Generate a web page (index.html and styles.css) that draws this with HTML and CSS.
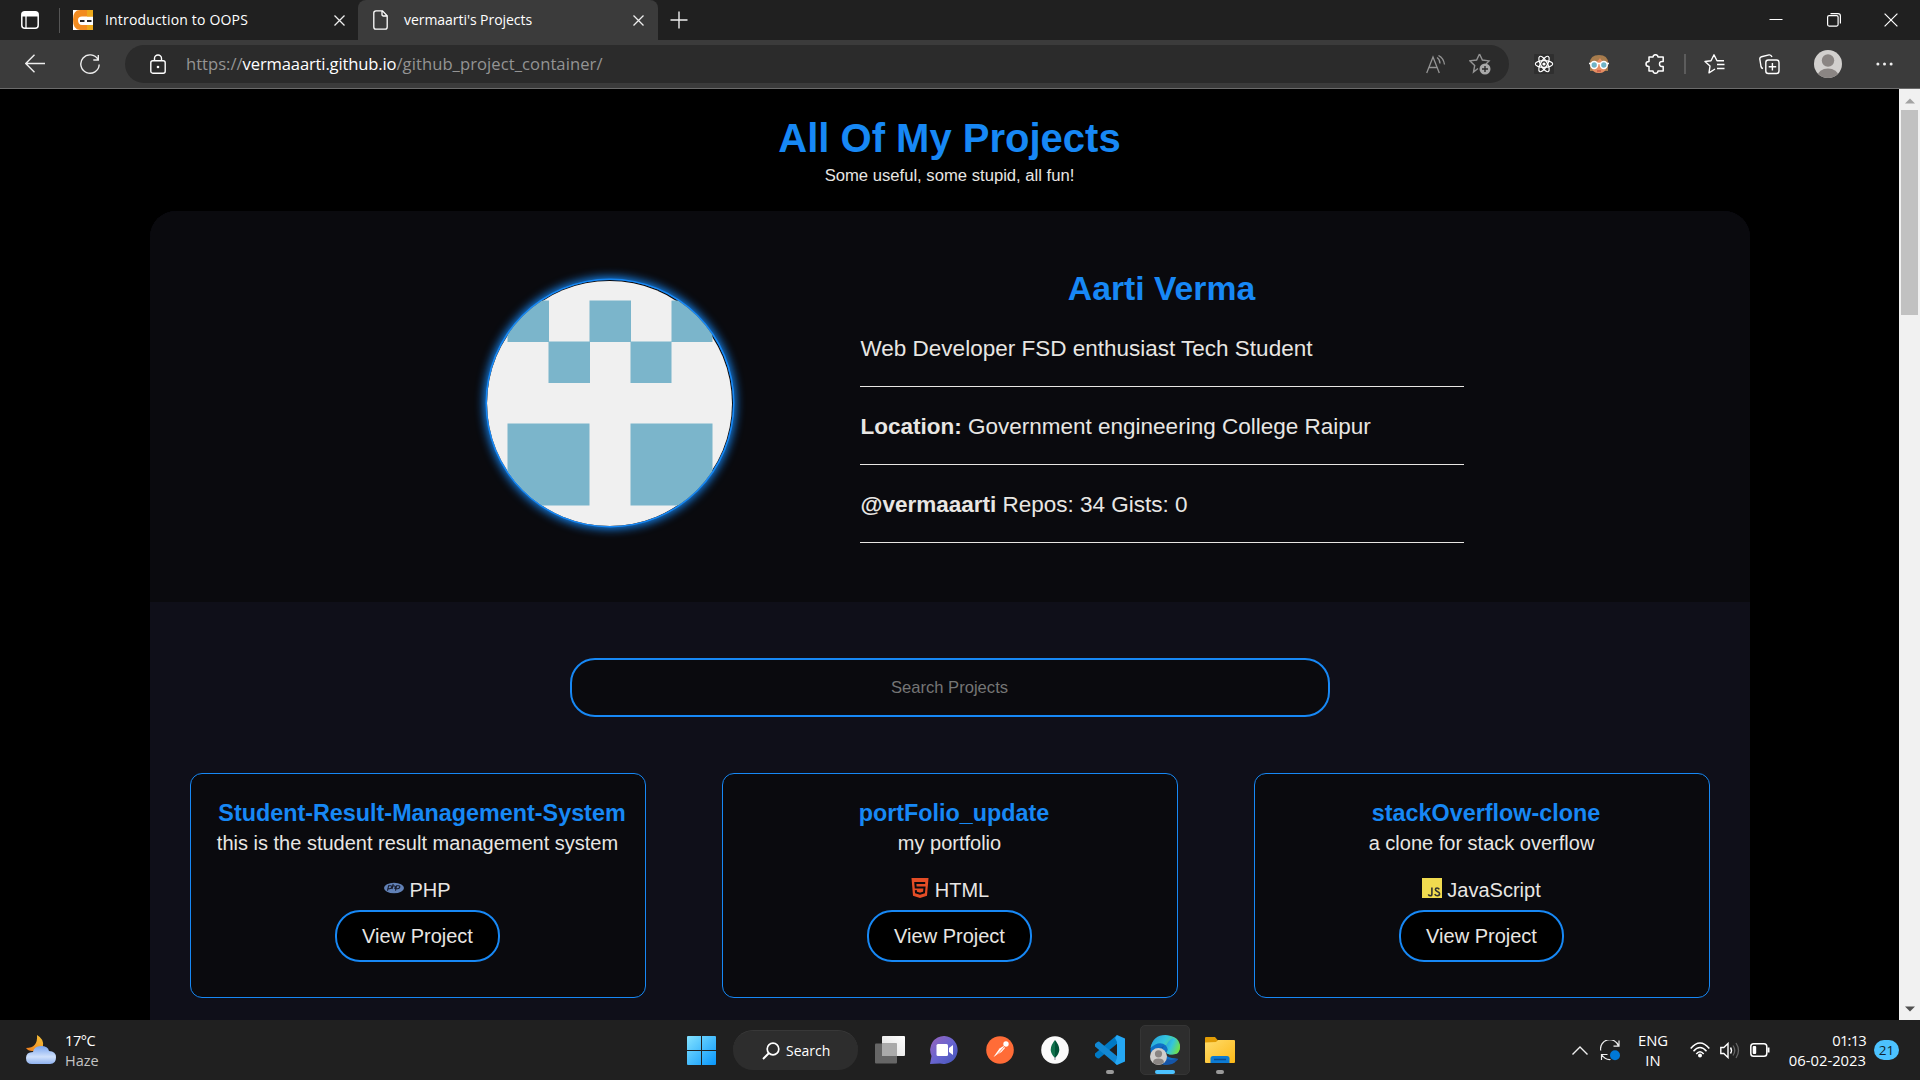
FILE: index.html
```html
<!DOCTYPE html>
<html lang="en">
<head>
<meta charset="utf-8">
<title>vermaarti's Projects</title>
<link rel="stylesheet" href="styles.css">
</head>
<body>
<div class="screen">
  <header class="tabbar">
    <svg class="i-tabs" width="18" height="18" viewBox="0 0 18 18"><rect x=".8" y=".8" width="16.4" height="16.4" rx="3" fill="none" stroke="#fff" stroke-width="1.5"/><path d="M1 3a2 2 0 0 1 2-2h12a2 2 0 0 1 2 2v2.500H1z" fill="#fff"/><path d="M5 5v12" stroke="#fff" stroke-width="1.300"/></svg>
    <span class="tab-sep"></span>
    <div class="tab">
      <svg width="20" height="20" viewBox="0 0 20 20"><rect width="20" height="20" fill="#fff"/><path d="M20 0H7Q0 0 0 9.500Q0 20 7 20H20V15H9Q5 15 5 10Q5 6.500 9 6.500H20z" fill="#f28b20"/><path d="M14 0h6v6.500h-6zM14 15h6v5h-6z" fill="#eda91b"/><path d="M7 11h4.500M14 11h4.500" stroke="#222" stroke-width="1.800"/></svg>
      <span class="tab-title intro">Introduction to OOPS</span>
      <svg class="x" width="11" height="11" viewBox="0 0 11 11"><path d="M.5.5l10 10M10.500.5l-10 10" stroke="#eee" stroke-width="1.300"/></svg>
    </div>
    <div class="tab active">
      <svg width="15" height="20" viewBox="0 0 15 20"><path d="M3 .8h6.500l4.700 4.900V17q0 2.200-2.200 2.200H3Q.8 19.200.8 17V3Q.8.8 3 .8zM9 1v3.500q0 1.500 1.500 1.500h3.500" fill="none" stroke="#fff" stroke-width="1.300"/></svg>
      <span class="tab-title">vermaarti's Projects</span>
      <svg class="x" width="11" height="11" viewBox="0 0 11 11"><path d="M.5.5l10 10M10.500.5l-10 10" stroke="#eee" stroke-width="1.300"/></svg>
    </div>
    <svg class="plus" width="18" height="18" viewBox="0 0 18 18"><path d="M9 .5v17M.5 9h17" stroke="#eee" stroke-width="1.400"/></svg>
    <div class="window-buttons">
      <svg width="14" height="14" viewBox="0 0 14 14"><path d="M.5 6.500h13" stroke="#fff"/></svg>
      <svg width="14" height="14" viewBox="0 0 14 14"><rect x=".6" y="2.600" width="10.500" height="10.500" rx="1.500" fill="none" stroke="#fff" stroke-width="1.200"/><path d="M3.500.6h7.500q2.400 0 2.400 2.400v7.500" fill="none" stroke="#fff" stroke-width="1.200"/></svg>
      <svg width="14" height="14" viewBox="0 0 14 14"><path d="M.6.6l12.800 12.800M13.400.6L.6 13.400" stroke="#fff" stroke-width="1.200"/></svg>
    </div>
  </header>

  <nav class="toolbar">
    <svg width="21" height="20" viewBox="0 0 21 20"><path d="M20 9.500H1M9.500.8L.8 9.500l8.700 8.700" fill="none" stroke="#eee" stroke-width="1.400"/></svg>
    <svg class="reload" width="21" height="21" viewBox="0 0 21 21"><path d="M18 5.500A9.200 9.200 0 1 0 19.200 10.500M18.300 1v5h-5" fill="none" stroke="#eee" stroke-width="1.400"/></svg>
    <div class="omnibox">
      <svg width="16" height="21" viewBox="0 0 16 21"><rect x=".8" y="6.800" width="14.400" height="12.400" rx="2" fill="none" stroke="#fff" stroke-width="1.400"/><path d="M4.500 7V4.500a3.500 3.500 0 0 1 7 0V7" fill="none" stroke="#fff" stroke-width="1.400"/><circle cx="8" cy="13" r="1.300" fill="#fff"/></svg>
      <span class="url"><span>https://</span><span class="domain">vermaaarti.github.io</span><span class="path">/github_project_container/</span></span>
      <svg class="aloud" width="20" height="19" viewBox="0 0 20 19"><path d="M.7 18L7 2l6.300 16M3 12.500h8M11 2.500q3 2 3 6M12.500.500q5 2.500 6 9" fill="none" stroke="#949494" stroke-width="1.300"/></svg>
      <svg class="staradd" width="23" height="22" viewBox="0 0 23 22"><path d="M10.500 1l2.900 6 6.600.9-3 3M9 15.500l-4.500 3.500 1.200-6.500L1 7.900 7.600 7l2.900-6" fill="none" stroke="#949494" stroke-width="1.400"/><circle cx="16" cy="16" r="5.500" fill="#a8a8a8"/><path d="M16 13v6M13 16h6" stroke="#2b2b2b" stroke-width="1.400"/></svg>
    </div>
    <svg class="react" width="20" height="20" viewBox="0 0 20 20"><rect width="20" height="20" rx="1" fill="#2f2f2f"/><g fill="none" stroke="#fff" stroke-width="1.200"><ellipse cx="10" cy="10" rx="8.700" ry="3.300"/><ellipse cx="10" cy="10" rx="8.700" ry="3.300" transform="rotate(60 10 10)"/><ellipse cx="10" cy="10" rx="8.700" ry="3.300" transform="rotate(120 10 10)"/></g><circle cx="10" cy="10" r="1.600" fill="#fff"/></svg>
    <svg class="face" width="20" height="20" viewBox="0 0 20 20"><path d="M1 17V9Q1 1 10 1t9 8v8z" fill="#a77c4d"/><path d="M3 9q5 0 8-5 2 4 6 5v4q0 6-7 6t-7-6z" fill="#e58d62"/><path d="M0 9.500h20" stroke="#fff" stroke-width="1.600"/><circle cx="5.200" cy="11" r="3.400" fill="#6fb3c6" stroke="#fff" stroke-width="1.500"/><circle cx="14.800" cy="11" r="3.400" fill="#6fb3c6" stroke="#fff" stroke-width="1.500"/><path d="M8 17h4" stroke="#b53d35"/></svg>
    <svg class="puzzle" width="20" height="20" viewBox="0 0 20 20"><path d="M4 3h4q0-2.300 2.500-2.300T13 3h5.200v4.500q-3.700-.5-3.700 2.500t3.700 2.500V17H13q0 2.300-2.500 2.300T8 17H4v-4.500Q1 12.500 1 10t3-2.500z" fill="none" stroke="#fff" stroke-width="1.500" stroke-linejoin="round"/></svg>
    <span class="tool-sep"></span>
    <svg class="favs" width="21" height="20" viewBox="0 0 21 20"><path d="M11 15l-6 3.800L6 12 1 7.500l6-.8L10 .8l3 5.900h7M13 10.500h7.500M13 14.500h7.500" fill="none" stroke="#fff" stroke-width="1.400" stroke-linejoin="round"/></svg>
    <svg class="coll" width="21" height="21" viewBox="0 0 21 21"><path d="M4 14.500q-1.700-.4-2-2L.8 5Q.6 3.200 2.500 2.700L10 .9q2-.4 3 2.100" fill="none" stroke="#fff" stroke-width="1.400"/><rect x="6.800" y="6" width="13.200" height="13.500" rx="2.500" fill="none" stroke="#fff" stroke-width="1.400"/><path d="M13.400 9v7.500M9.700 12.800h7.500" stroke="#fff" stroke-width="1.400"/></svg>
    <svg class="profile-pic" width="28" height="28" viewBox="0 0 28 28"><clipPath id="pc"><circle cx="14" cy="14" r="14"/></clipPath><g clip-path="url(#pc)"><rect width="28" height="28" fill="#d2d0ce"/><circle cx="14" cy="10.500" r="6.200" fill="#8a8583"/><ellipse cx="14" cy="26" rx="10.500" ry="7.500" fill="#8a8583"/></g></svg>
    <svg class="dots" width="17" height="4" viewBox="0 0 17 4"><g fill="#eee"><circle cx="1.900" cy="2" r="1.500"/><circle cx="8.500" cy="2" r="1.500"/><circle cx="15.100" cy="2" r="1.500"/></g></svg>
  </nav>

  <div class="viewport">
    <main class="page">
      <h1>All Of My Projects</h1>
      <p class="tagline">Some useful, some stupid, all fun!</p>
      <div class="container">
        <section class="profile">
          <svg class="avatar" viewBox="0 0 246 246"><circle cx="122.500" cy="123.500" r="122.500" fill="#f0f0f0"/><path fill="#7bb5cb" d="M20.500 20.500h41.500v41.500h-41.500zM102.500 20.500h41.500v41.500h-41.500zM184.500 20.500h41v41.500h-41zM61.500 61.500h41.500v41.500h-41.500zM143.500 61.500h41v41.500h-41zM20.500 143.500h82v82h-82zM143.500 143.500h82v82h-82z"/></svg>
          <div class="bio">
            <h2>Aarti Verma</h2>
            <p>Web Developer FSD enthusiast Tech Student</p>
            <p><b>Location:</b> Government engineering College Raipur</p>
            <p><b>@vermaaarti</b> Repos: 34 Gists: 0</p>
          </div>
        </section>
        <section class="projects">
          <input class="search" type="text" placeholder="Search Projects">
          <div class="cards">
            <article class="card">
              <h3>Student-Result-Management-System</h3>
              <p>this is the student result management system</p>
              <div class="lang"><svg width="20" height="20" viewBox="0 0 20 20"><ellipse cx="10" cy="10" rx="10" ry="5.200" fill="#6181b6"/><path d="M3.500 12.700l1.100-5h2q1.500 0 1.200 1.400T5.600 10.700H4M8 11l1.200-5M8.700 8h1.800q1 0 .7 1.200L10.800 11M11.500 12.700l1.100-5h2q1.500 0 1.200 1.400t-2.200 1.600h-1.500" fill="none" stroke="#15192a" stroke-width="1.100"/></svg><span>PHP</span></div>
              <button>View Project</button>
            </article>
            <article class="card">
              <h3>portFolio_update</h3>
              <p>my portfolio</p>
              <div class="lang html"><svg width="20" height="20" viewBox="0 0 20 20"><path d="M1.500 0h17l-1.500 17.800L10 20l-7-2.200z" fill="#e44d26"/><path d="M15.200 5H5.300l.4 4.500h8.800l-.5 5-4 1.200-4-1.200-.2-2.300" fill="none" stroke="#0a0a0e" stroke-width="2"/></svg><span>HTML</span></div>
              <button>View Project</button>
            </article>
            <article class="card">
              <h3>stackOverflow-clone</h3>
              <p>a clone for stack overflow</p>
              <div class="lang"><svg width="20" height="20" viewBox="0 0 20 20"><rect width="20" height="20" fill="#f0db4f"/><path d="M9.900 9.500v6.500q0 1.800-1.600 1.800-1.300 0-2-1.400M17.300 11.300q-.8-1.300-2.200-1.300-1.700 0-1.700 1.500 0 1.200 1.900 1.900 2.300.8 2.300 2.400 0 1.900-2.200 1.900-1.800 0-2.700-1.600" fill="none" stroke="#323330" stroke-width="1.600"/></svg><span>JavaScript</span></div>
              <button>View Project</button>
            </article>
          </div>
        </section>
      </div>
    </main>
    <div class="scrollbar">
      <svg width="10" height="6" viewBox="0 0 10 6"><path d="M0 5.500L5 .5l5 5z" fill="#a3a3a3"/></svg>
      <span class="thumb"></span>
      <svg class="down" width="10" height="6" viewBox="0 0 10 6"><path d="M0 .5h10l-5 5z" fill="#505050"/></svg>
    </div>
  </div>

  <footer class="taskbar">
    <div class="weather">
      <svg width="30" height="30" viewBox="0 0 30 30"><defs><linearGradient id="mo" x1="1" y1="0" x2="0" y2="1"><stop offset="0" stop-color="#f7c63a"/><stop offset="1" stop-color="#ee7a1d"/></linearGradient><linearGradient id="cl" x1="0" y1="0" x2="0" y2="1"><stop offset="0" stop-color="#7aa5ee"/><stop offset=".6" stop-color="#cfe0fb"/><stop offset="1" stop-color="#8fb2ef"/></linearGradient></defs><path d="M11 0q7 4 6 11T6 16Q2 16 0 13q12 0 11-13z" fill="url(#mo)"/><path d="M6 29q-6 0-6-6t7-6q1-6 8-6t8 5q7 0 7 6.500T24 29z" fill="url(#cl)"/></svg>
      <div><span class="temp">17°C</span><span class="haze">Haze</span></div>
    </div>
    <div class="apps">
      <svg class="start" width="29" height="29" viewBox="0 0 29 29"><defs><linearGradient id="wi" x1="0" y1="0" x2="1" y2="1"><stop offset="0" stop-color="#84e3ff"/><stop offset="1" stop-color="#0896fb"/></linearGradient></defs><path d="M1 0h13v14H0V1q0-1 1-1zM15 0h13q1 0 1 1v13H15zM0 15h14v14H1q-1 0-1-1zM15 15h14v13q0 1-1 1H15z" fill="url(#wi)"/></svg>
      <div class="tb-search"><svg width="18" height="18" viewBox="0 0 18 18"><circle cx="11" cy="7" r="5.800" fill="none" stroke="#fff" stroke-width="1.700"/><path d="M7 11l-6 6" stroke="#fff" stroke-width="1.900"/></svg><span>Search</span></div>
      <svg class="tview" width="31" height="28" viewBox="0 0 31 28"><defs><linearGradient id="tv" x1="0" y1="1" x2="1" y2="0"><stop offset="0" stop-color="#ddd"/><stop offset="1" stop-color="#fff"/></linearGradient></defs><rect x="7" width="23" height="20" rx="1" fill="url(#tv)"/><rect y="7.500" width="22" height="20" rx="1" fill="#666"/><rect x="7" y="7.500" width="15" height="12.500" fill="#aaa"/></svg>
      <svg class="chat" width="29" height="29" viewBox="0 0 29 29"><defs><linearGradient id="ch" x1="0" y1="0" x2="1" y2="1"><stop offset="0" stop-color="#9a62ba"/><stop offset=".5" stop-color="#6965d0"/><stop offset="1" stop-color="#4355b9"/></linearGradient></defs><path d="M14.500 0A14 14 0 1 1 10 27.500L0 28l1.500-8A14 14 0 0 1 14.500 0z" fill="url(#ch)"/><rect x="6.500" y="8" width="11.500" height="12" rx="1.500" fill="#fff"/><path d="M19 12l4-3v10l-4-3z" fill="#fff"/></svg>
      <svg class="post" width="28" height="28" viewBox="0 0 28 28"><circle cx="14" cy="14" r="13.800" fill="#ff6c37"/><path d="M7.500 21l6-8.500 4-2.500 1.500 2-3.500 4z" fill="#fff"/><circle cx="20" cy="8" r="2.700" fill="#fff"/><path d="M18.500 10.500l-9 10" stroke="#ff6c37" stroke-width=".8"/></svg>
      <svg class="mongo" width="28" height="28" viewBox="0 0 28 28"><circle cx="14" cy="14" r="13.800" fill="#fafafa"/><path d="M14 4q-8.500 10 0 18z" fill="#10704c"/><path d="M14 4q8.500 10 0 18z" fill="#005237"/><path d="M14 21v3" stroke="#889" /></svg>
      <div class="app vs"><svg width="30" height="30" viewBox="0 0 30 30"><path d="M22 0l1 8L4 23.500Q2.500 24 0 21v-2.500z" fill="#0079c4"/><path d="M22 30l1-8L4 6.500Q2.500 6 0 9v2.500z" fill="#1288d3"/><path d="M22 0l8 3.500v23L22 30l-2-2 2-5V7l-2-4z" fill="#25a7f4"/></svg><i></i></div>
      <div class="app edge"><svg width="30" height="30" viewBox="0 0 30 30"><defs><linearGradient id="eg" x1="0" y1="0" x2="1" y2=".5"><stop offset="0" stop-color="#2498dc"/><stop offset=".5" stop-color="#34c5dc"/><stop offset="1" stop-color="#6fe04b"/></linearGradient></defs><circle cx="15" cy="15" r="14.500" fill="#0f6fc6"/><path d="M.5 13Q3 0 15.500 0 30 1 30 12q0 7.500-8 7.500-5 0-5.500-2 3-3-.5-7Q9 5 .5 13z" fill="url(#eg)"/><path d="M14 11q-5 6 0 11t13 1.500q2.500-.5 0 2Q23 30 15 30 3 26 8 14z" fill="#1555a8"/><path d="M30 12q0 8-8 7.500-5 0-5.500-2-3 5 10 6l4-.5V12z" fill="#2d2d2d"/><path d="M24 3q6 4 6 9 0 7.500-8 7.500-5 0-5.500-2 3-3-.5-7Q20 3 24 3z" fill="url(#eg)"/><circle cx="8.500" cy="21.500" r="8.500" fill="#d0cecc"/><circle cx="8.500" cy="18.800" r="3.600" fill="#8a8583"/><path d="M3 27.500q0-4 5.500-4t5.500 4Q8 32 3 27.500z" fill="#8a8583"/></svg><i></i></div>
      <div class="app exp"><svg width="30" height="27" viewBox="0 0 30 27"><defs><linearGradient id="fo" x1="0" y1="0" x2="1" y2="1"><stop offset="0" stop-color="#ffdc6b"/><stop offset="1" stop-color="#fcb817"/></linearGradient></defs><path d="M0 1q0-1 1-1h9l3 3.500V8H0z" fill="#e19c05"/><path d="M0 5.500l11-.5 2-2h16q1 0 1 1v21q0 1-1 1H1q-1 0-1-1z" fill="url(#fo)"/><path d="M5.500 26v-4.500q0-2.500 2.500-2.500h14q2.500 0 2.500 2.500v4.500z" fill="#0c7bd4"/><path d="M9 22.500h12" stroke="#0a4d92" stroke-width="1.500"/></svg><i></i></div>
    </div>
    <div class="tray">
      <svg width="16" height="9" viewBox="0 0 16 9"><path d="M.5 8.500L8 1l7.500 7.500" fill="none" stroke="#eee" stroke-width="1.400"/></svg>
      <svg class="sync" width="21" height="21" viewBox="0 0 21 21"><path d="M.7 10.500A9.200 9.200 0 0 1 18.500 6M19 .5V6.200h-5.500M1.500 20V14.500h6M1.500 14.500q3.500 5.500 9 5" fill="none" stroke="#eee" stroke-width="1.200"/><circle cx="15" cy="15.300" r="5" fill="#0078d7"/></svg>
      <div class="langsel">ENG<br>IN</div>
      <svg class="wifi" width="20" height="16" viewBox="0 0 20 16"><path d="M.7 6.500Q10-4.500 19.300 6.500M3.500 9.300q6.500-7.500 13 0M6.300 12q3.700-4.500 7.400 0" fill="none" stroke="#fff" stroke-width="1.500"/><circle cx="10" cy="13.500" r="2" fill="#fff"/></svg>
      <svg class="spk" width="20" height="17" viewBox="0 0 20 17"><path d="M.8 5.500h3L8 1.500v14l-4.200-4h-3z" fill="none" stroke="#fff" stroke-width="1.400"/><path d="M10.500 5.500q2 3 0 6" fill="none" stroke="#fff" stroke-width="1.400"/><path d="M13 3.500q3.500 5 0 10M16 1q5 7.500 0 15" fill="none" stroke="#666" stroke-width="1.300"/></svg>
      <svg class="batt" width="20" height="14" viewBox="0 0 20 14"><rect x=".8" y=".8" width="16" height="12.400" rx="2.800" fill="none" stroke="#fff" stroke-width="1.500"/><rect x="2.700" y="3" width="3.500" height="8" rx="1" fill="#fff"/><path d="M18.500 4.500v5" stroke="#fff" stroke-width="2"/></svg>
      <div class="clock"><span class="time">01:13</span><br>06-02-2023</div>
      <span class="badge">21</span>
    </div>
  </footer>
</div>
</body>
</html>
```
FILE: styles.css
```css
* { box-sizing: border-box; }
body { margin: 0; background: #000; overflow: hidden; }
h1, h2, h3, p { margin: 0; font-weight: normal; }
svg { display: block; flex: none; }

.screen {
  width: 1920px;
  height: 1080px;
  display: flex;
  flex-direction: column;
  font-family: "Open Sans", "Noto Sans", sans-serif;
  color: #fff;
}

/* Tab strip */
.tabbar {
  height: 40px;
  flex: none;
  display: flex;
  align-items: center;
  background: #202020;
  padding-left: 21px;
}
.tab-sep { width: 1px; height: 25px; margin-left: 20px; background: #555; }
.tab {
  width: 298px;
  height: 40px;
  display: flex;
  align-items: center;
  padding: 0 13px;
}
.tab.active {
  width: 300px;
  background: #3b3b3b;
  border-radius: 8px 8px 0 0;
  padding: 0 14px 0 15px;
}
.tab-title { font-size: 14px; line-height: 20px; margin-left: 16px; white-space: nowrap; letter-spacing: -0.05px; }
.tab-title.intro { margin-left: 12px; letter-spacing: 0.17px; }
.x { margin-left: auto; }
.plus { margin-left: 12px; }
.window-buttons { margin-left: auto; display: flex; gap: 43.500px; padding-right: 22px; }

/* Address bar row */
.toolbar {
  height: 49px;
  flex: none;
  display: flex;
  align-items: center;
  background: #3b3b3b;
  border-bottom: 1px solid #6b6b6b;
  padding-left: 25px;
}
.reload { margin-left: 34px; }
.omnibox {
  width: 1384px;
  height: 38px;
  margin-left: 24px;
  border-radius: 19px;
  background: #2b2b2b;
  display: flex;
  align-items: center;
  padding: 0 17px 0 25px;
}
.url { margin-left: 20px; font-size: 16.6px; line-height: 24px; color: #949494; white-space: nowrap; }
.domain { color: #fff; letter-spacing: -0.15px; }
.path { letter-spacing: 0.07px; }
.aloud { margin-left: auto; }
.staradd { margin-left: 23px; }
.react { margin-left: 25px; }
.face { margin-left: 35px; }
.puzzle { margin-left: 36px; }
.tool-sep { width: 2px; height: 20px; margin-left: 19px; background: #5c5c5c; }
.favs { margin-left: 18px; }
.coll { margin-left: 34px; }
.profile-pic { margin-left: 34px; }
.dots { margin-left: 34px; }

/* Web page */
.viewport { height: 931px; flex: none; display: flex; overflow: hidden; background: #000; }
.page {
  flex: 1;
  padding-top: 26px;
  display: flex;
  flex-direction: column;
  align-items: center;
  font-family: "Liberation Sans", Arial, sans-serif;
  color: #e8e6e3;
}
h1 { font-size: 40px; line-height: 46px; font-weight: bold; color: #1788f5; }
.tagline { font-size: 16.65px; line-height: 26px; margin: 2px 0 22px; }
.container { width: 1600px; flex: none; border-radius: 26px 26px 0 0; background: #0f0f19; overflow: hidden; }
.profile {
  height: 391px;
  background: #0a0a0e;
  display: flex;
  padding: 58px 286px 0 337px;
  justify-content: space-between;
}
.avatar {
  width: 246px;
  height: 246px;
  margin-top: 11px;
  border-radius: 50%;
  box-shadow: 0 0 0 1.500px #1788f5, 0 0 10px 3px #1788f5;
}
.bio { width: 604px; }
.bio h2 { font-size: 33.7px; line-height: 39px; margin-bottom: 1px; font-weight: bold; color: #1788f5; text-align: center; }
.bio p {
  height: 78px;
  padding: 27px 0 0 1px;
  font-size: 22.5px;
  line-height: 26px;
  border-bottom: 1px solid #e8e6e3;
}
.projects { display: flex; flex-direction: column; align-items: center; padding: 56px 40px 23px; }
.search {
  width: 760px;
  height: 59px;
  border: 2px solid #1788f5;
  border-radius: 25px;
  background: #0a0a0e;
  font: 16.6px "Liberation Sans", Arial, sans-serif;
  text-align: center;
  color: #e8e6e3;
  padding: 0;
}
.search::placeholder { color: #757575; }
.cards { width: 100%; display: grid; grid-template-columns: repeat(3, 456px); column-gap: 76px; margin-top: 56px; }
.card {
  height: 225px;
  border: 1px solid #1788f5;
  border-radius: 12px;
  background: #0a0a0e;
  display: flex;
  flex-direction: column;
  align-items: center;
  padding-top: 26px;
  font-size: 20px;
  line-height: 23px;
}
.card h3 { font-size: 23.35px; line-height: 27px; font-weight: bold; color: #1788f5; padding-left: 9px; }
.card p { margin-top: 5px; }
.lang { display: flex; margin-top: 24px; gap: 5px; }
.lang svg { margin-top: -1px; }
.card button {
  width: 165px;
  height: 52px;
  margin-top: 8px;
  border: 2px solid #1788f5;
  border-radius: 25px;
  background: #000;
  color: #e8e6e3;
  font: 20px "Liberation Sans", Arial, sans-serif;
  padding: 0;
}

.scrollbar {
  width: 21px;
  flex: none;
  background: #f1f1f1;
  display: flex;
  flex-direction: column;
  align-items: center;
  padding: 9px 0 8px;
}
.thumb { width: 17px; height: 205px; margin-top: 6px; background: #c1c1c1; }
.down { margin-top: auto; }

/* Taskbar */
.taskbar {
  height: 60px;
  flex: none;
  background: #202020;
  display: grid;
  grid-template-columns: 661px 611px 1fr;
}
.weather { display: flex; padding: 15px 0 0 26px; gap: 9px; font-size: 14.500px; line-height: 20px; }
.weather div { display: flex; flex-direction: column; margin-top: -4px; }
.temp { letter-spacing: -0.4px; }
.haze { color: #c4c4c4; }
.apps { display: flex; align-items: center; padding-left: 26px; }
.tb-search {
  width: 125px;
  height: 40px;
  margin-left: 17px;
  border-radius: 20px;
  background: #2d2d2d;
  border-top: 1px solid #383838;
  display: flex;
  align-items: center;
  padding-left: 29px;
  gap: 6px;
  font-size: 14px;
}
.tview { margin-left: 17px; }
.chat { margin-left: 24px; }
.post { margin-left: 27px; }
.mongo { margin-left: 27px; }
.app {
  width: 50px;
  height: 50px;
  display: flex;
  align-items: center;
  justify-content: center;
  position: relative;
  border-radius: 5px;
}
.app i { position: absolute; bottom: 1px; left: 21px; width: 8px; height: 4px; border-radius: 2px; background: #9a9a9a; }
.vs { margin-left: 16px; }
.edge { margin-left: 5px; background: #2d2d2d; border: 1px solid #353535; }
.edge i { width: 20px; left: 14px; bottom: 0; background: #4cc2ff; }
.exp { margin-left: 5px; }
.tray { display: flex; align-items: center; justify-content: flex-end; padding-right: 21px; font-size: 14.800px; line-height: 20px; }
.sync { margin-left: 12px; }
.langsel { width: 34px; margin-left: 15px; text-align: center; }
.wifi { margin-left: 20px; }
.spk { margin-left: 10px; }
.batt { margin-left: 10px; }
.clock { width: 88px; margin-left: 8px; text-align: right; }
.time { letter-spacing: -0.8px; }
.clock { margin-top: -1px; }
.badge {
  width: 25px;
  height: 20px;
  margin-left: 8px;
  border-radius: 10px;
  background: #4cc2ff;
  color: #10222e;
  font-size: 13.500px;
  text-align: center;
}
```
